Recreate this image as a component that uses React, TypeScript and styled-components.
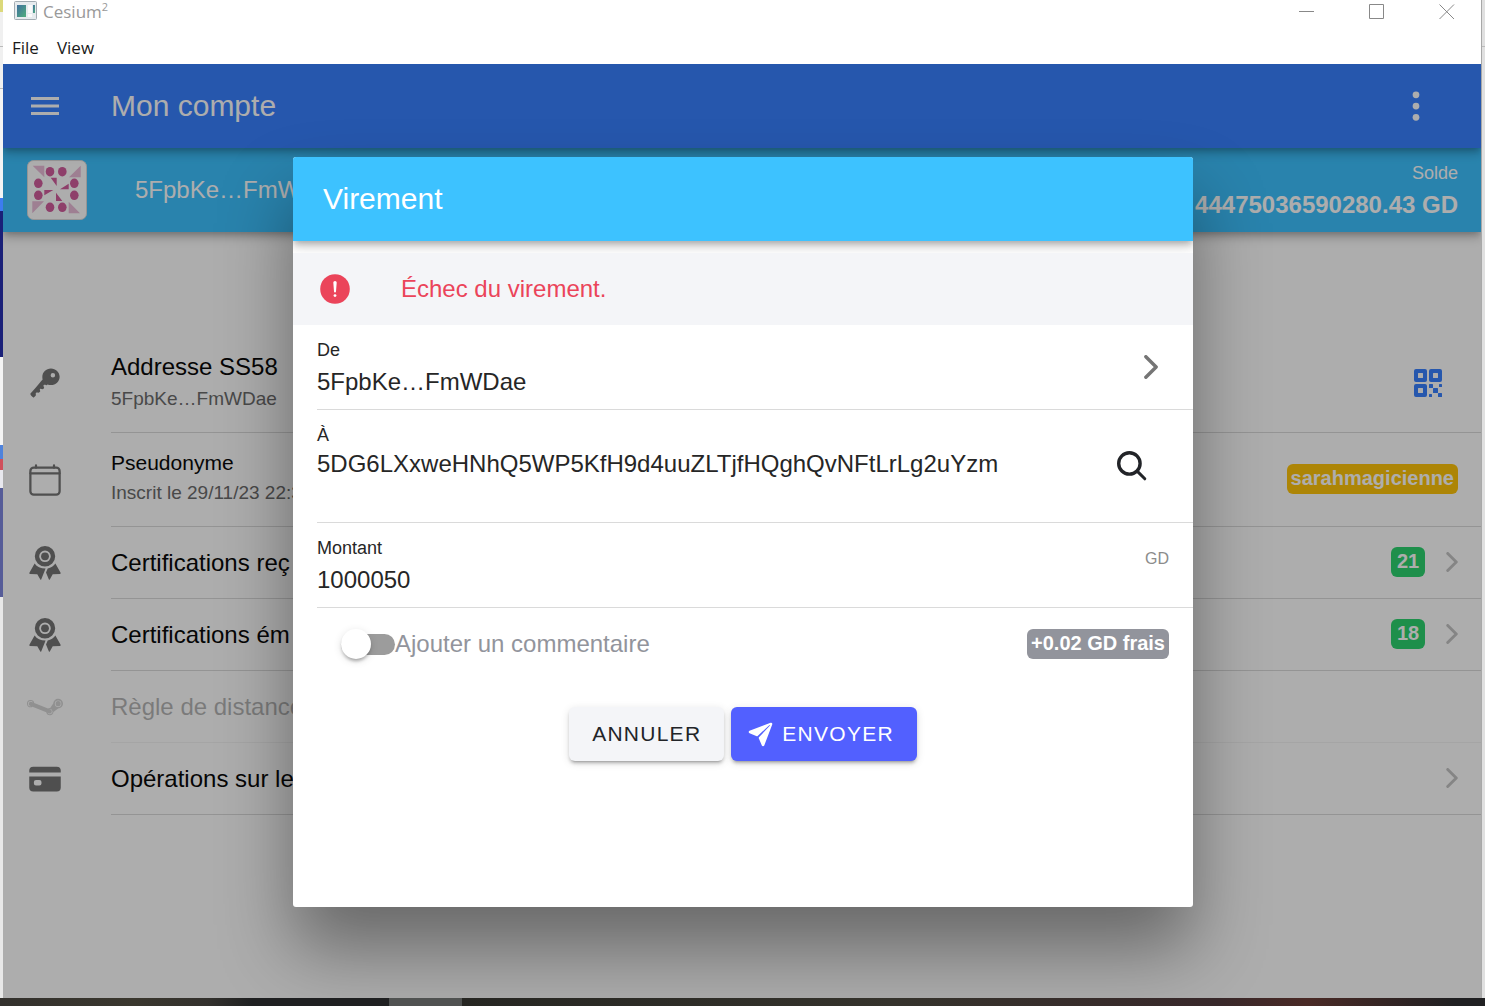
import React from "react";
import styled, { createGlobalStyle } from "styled-components";
import {
  IoCalendarClearOutline,
  IoCard,
  IoEllipsisVertical,
  IoKey,
  IoLogoSteam,
  IoPaperPlane,
  IoQrCode,
} from "react-icons/io5";

const color = {
  primary: "#3880ff",
  secondary: "#3dc2ff",
  tertiary: "#5260ff",
  success: "#2dd36f",
  warning: "#ffc409",
  danger: "#eb445a",
  medium: "#92949c",
  light: "#f4f5f8",
  dark: "#222428",
  line: "#dadada",
  icon: "#757575",
};

const barShadow =
  "0 3px 6px -2px rgba(0,0,0,.2), 0 6px 8px 0 rgba(0,0,0,.14), 0 2px 15px 0 rgba(0,0,0,.12)";

const GlobalStyle = createGlobalStyle`
  *, *::before { box-sizing: border-box; }
  body { margin: 0; font-family: "Liberation Sans", Arial, sans-serif; }
  button, input { font: inherit; color: inherit; }
  button { border: 0; padding: 0; background: none; cursor: pointer; }
  svg { display: block; flex: none; }
`;

/* ---------- desktop and window frame ---------- */

const Desktop = styled.div`
  min-height: 100vh;
  display: grid;
  grid-template-columns: 3px minmax(0, 1fr) 4px;
  grid-template-rows: minmax(0, 1fr) 8px;
  overflow: hidden;
`;

const LeftSliver = styled.div`
  background: linear-gradient(
    #dcd97a 12px, #f0f0f0 12px 46px, #bbb 46px 47px, #f0f0f0 47px 88px,
    #bbb 88px 89px, #f4f4f4 89px 198px, #3d7cf0 198px 211px, #1a2078 211px 357px,
    #f4f4f4 357px 445px, #4f83dc 445px 459px, #d0505c 459px 470px,
    #e8e8ee 470px 488px, #565c98 488px 597px, #e8e8e8 597px
  );
`;

const RightSliver = styled.div`
  border-left: 1px solid #a8a8a8;
  background: linear-gradient(#e0e0e0 46px, #bbb 46px 47px, #e0e0e0 47px);
`;

const Taskbar = styled.div`
  grid-column: 1 / -1;
  background: linear-gradient(
    90deg, #33312d, #3a372e 9%, #33312d 14%, #1f2021 17%, #1f2021 389px,
    #505251 389px 462px, #262622 462px, #35332c 60%, #38282a 82%, #4a2a26 88%, #202022 98%
  );
`;

const Window = styled.section`
  display: flex;
  flex-direction: column;
  min-width: 0;
  background: #fff;
`;

const SystemBars = styled.header`
  height: 64px;
  display: flex;
  flex-direction: column;
  justify-content: space-between;
  font-family: "Open Sans", "Noto Sans", sans-serif;
  font-size: 17px;
`;

const TitleBar = styled.div`
  display: flex;
  align-items: center;
  height: 24px;
  padding: 0 26px 0 11px;
  gap: 6px;
  color: #999;
`;

const WindowTitle = styled.span`
  flex: 1;
  line-height: 24px;
  sup { font-size: 11px; line-height: 0; }
`;

const WindowControls = styled.div`
  display: flex;
  gap: 54px;
  color: #888;
`;

const MenuBar = styled.nav`
  display: flex;
  gap: 18px;
  padding: 0 9px;
  height: 32px;
  line-height: 30px;
  color: #1a1a1a;
`;

/* ---------- account page ---------- */

const AppView = styled.div`
  position: relative;
  flex: 1;
  display: flex;
  flex-direction: column;
  overflow: hidden;
`;

const Toolbar = styled.header`
  position: relative;
  z-index: 1;
  flex: none;
  display: flex;
  align-items: center;
  height: 84px;
  padding: 0 47px 0 28px;
  background: ${color.primary};
  color: #fff;
  box-shadow: ${barShadow};
`;

const PageTitle = styled.h1`
  flex: 1;
  margin: 0 0 0 52px;
  font-size: 30px;
  font-weight: 400;
`;

const AccountBar = styled.div`
  flex: none;
  display: flex;
  align-items: center;
  gap: 48px;
  height: 84px;
  padding: 0 23px 0 24px;
  background: ${color.secondary};
  color: #fff;
  font-size: 24px;
  box-shadow: ${barShadow};
`;

const AccountName = styled.span`
  flex: 1;
`;

const Balance = styled.div`
  display: flex;
  flex-direction: column;
  padding-bottom: 2px;
  text-align: right;
  line-height: 32px;
  small { font-size: 18px; }
`;

const AccountList = styled.ul`
  list-style: none;
  margin: 101px 0 0;
  padding: 0 0 0 24px;
`;

const AccountRow = styled.li<{ $height: number; $disabled?: boolean }>`
  display: flex;
  align-items: center;
  gap: 48px;
  height: ${(p) => p.$height}px;
  color: ${color.icon};
  opacity: ${(p) => (p.$disabled ? 0.3 : 1)};
`;

const RowBody = styled.div`
  flex: 1;
  align-self: stretch;
  display: flex;
  align-items: center;
  justify-content: space-between;
  padding-right: 23px;
  border-bottom: 1px solid ${color.line};
`;

const RowText = styled.div<{ $small?: boolean }>`
  display: flex;
  flex-direction: column;
  padding-bottom: ${(p) => (p.$small ? 4 : 0)}px;
  color: #0a0a0a;
  font-size: ${(p) => (p.$small ? 21 : 24)}px;
  line-height: ${(p) => (p.$small ? 30 : 32)}px;
  small { font-size: 19px; color: #6c6c6c; }
`;

const RowEnd = styled.div`
  display: flex;
  align-items: center;
  gap: 21px;
  padding-bottom: 2px;
  color: #c4c4c4;
`;

const QrButton = styled.button`
  margin-right: 14px;
  color: ${color.primary};
`;

const Badge = styled.span<{ $bg: string }>`
  min-width: 34px;
  height: 30px;
  padding: 0 4px;
  border-radius: 6px;
  background: ${(p) => p.$bg};
  color: #fff;
  font-size: 20px;
  font-weight: 700;
  line-height: 29px;
  text-align: center;
`;

/* ---------- transfer dialog ---------- */

const Backdrop = styled.div`
  position: absolute;
  inset: 0;
  z-index: 2;
  display: grid;
  place-items: center;
  padding: 2px 0 0 2px;
  background: rgba(0, 0, 0, 0.32);
`;

const Dialog = styled.form`
  width: min(900px, 100%);
  min-height: 750px;
  border-radius: 3px;
  overflow: hidden;
  background: #fff;
  color: #262626;
  box-shadow: 0 42px 72px rgba(0, 0, 0, 0.4);
`;

const DialogTitle = styled.h2`
  margin: 0;
  padding: 0 30px;
  background: ${color.secondary};
  color: #fff;
  font-size: 30px;
  font-weight: 400;
  line-height: 84px;
  box-shadow: ${barShadow};
`;

const ErrorItem = styled.div`
  display: flex;
  align-items: center;
  gap: 48px;
  height: 72px;
  margin-top: 12px;
  padding: 0 24px;
  background: ${color.light};
  color: ${color.danger};
  font-size: 24px;
  line-height: 32px;
`;

const Field = styled.div<{ $height: number }>`
  display: flex;
  align-items: center;
  height: ${(p) => p.$height}px;
  margin-left: 24px;
  padding-right: 24px;
  border-bottom: 1px solid ${color.line};
`;

const PickerField = styled.button`
  display: flex;
  align-items: center;
  width: calc(100% - 24px);
  height: 85px;
  margin-left: 24px;
  padding-right: 35px;
  border-bottom: 1px solid ${color.line};
  text-align: left;
`;

const PickerIcon = styled.span`
  color: ${color.icon};
`;

const FieldBody = styled.span<{ $gap?: number }>`
  flex: 1;
  align-self: stretch;
  display: flex;
  flex-direction: column;
  gap: ${(p) => p.$gap ?? 0}px;
  padding-top: 12px;
  font-size: 24px;
  line-height: 32px;
`;

const FieldLabel = styled.label`
  font-size: 18px;
  line-height: 26px;
`;

const FieldInput = styled.input`
  width: 100%;
  height: 32px;
  padding: 0;
  border: 0;
  outline: 0;
  background: none;
`;

const SearchButton = styled.button`
  margin-right: 19px;
  color: ${color.dark};
`;

const Unit = styled.span`
  align-self: flex-start;
  padding-top: 24px;
  font-size: 16px;
  line-height: 24px;
  color: #8c8c8c;
`;

const OptionsRow = styled.div`
  display: flex;
  align-items: center;
  justify-content: space-between;
  height: 72px;
  padding: 0 24px 0 48px;
`;

const ToggleLabel = styled.label`
  display: flex;
  align-items: center;
  color: ${color.medium};
  font-size: 24px;
`;

const Toggle = styled.input`
  appearance: none;
  display: flex;
  align-items: center;
  width: 54px;
  height: 21px;
  margin: 0;
  border-radius: 21px;
  background: #9c9c9c;
  &::before {
    content: "";
    flex: none;
    width: 30px;
    height: 30px;
    border-radius: 50%;
    background: #fff;
    box-shadow: 0 4px 3px -3px rgba(0,0,0,.2), 0 3px 3px rgba(0,0,0,.14), 0 2px 8px rgba(0,0,0,.12);
  }
  &:checked { justify-content: flex-end; background: ${color.tertiary}; }
`;

const Actions = styled.footer`
  display: flex;
  justify-content: center;
  gap: 7px;
  padding-top: 27px;
`;

const ActionButton = styled.button<{ $primary?: boolean }>`
  display: flex;
  align-items: center;
  gap: 8px;
  height: 54px;
  padding: 0 23px 0 ${(p) => (p.$primary ? 16 : 23)}px;
  border-radius: 6px;
  background: ${(p) => (p.$primary ? color.tertiary : color.light)};
  color: ${(p) => (p.$primary ? "#fff" : color.dark)};
  font-size: 21px;
  letter-spacing: 0.06em;
  text-transform: uppercase;
  box-shadow: 0 4px 2px -3px rgba(0,0,0,.2), 0 3px 3px rgba(0,0,0,.14), 0 2px 8px rgba(0,0,0,.12);
`;

/* ---------- drawings ---------- */

const AppIcon = () => (
  <svg width="23" height="22" viewBox="0 0 23 22">
    <defs>
      <linearGradient id="pane" x1="0" y1="0" x2="1" y2="1">
        <stop offset="0" stopColor="#3f6f9f" />
        <stop offset="1" stopColor="#4fae7c" />
      </linearGradient>
    </defs>
    <rect x=".5" y=".5" width="22" height="18" rx="1" fill="#e6ebee" stroke="#a3acb3" />
    <rect x="3" y="4" width="9" height="12" fill="url(#pane)" />
    <rect x="14" y="4" width="4" height="8" fill="#fafafa" />
    <rect x="19" y="4" width="2" height="8" fill="url(#pane)" />
    <rect x="14" y="13" width="4" height="3" fill="#fafafa" />
  </svg>
);

const ControlIcon = ({ d }: { d: string }) => (
  <svg width="16" height="16" viewBox="0 0 16 16" fill="none" stroke="currentColor">
    <path d={d} />
  </svg>
);

const MenuIcon = () => (
  <svg width="28" height="18" viewBox="0 0 28 18" fill="currentColor">
    <path d="M0 0h28v3H0zM0 7.5h28v3H0zM0 15h28v3H0z" />
  </svg>
);

const RibbonIcon = () => (
  <svg width="36" height="36" viewBox="0 0 36 36" fill="currentColor">
    <circle cx="18" cy="11.3" r="8" fill="none" stroke="currentColor" strokeWidth="4.4" />
    <circle cx="18" cy="11.3" r="3.9" />
    <path d="M7.6 18.6C9.9 21.8 13.5 23.6 18.6 23.6L14.2 34.4q-.4.9-.9 0L10.3 29.2 3 28.9q-1.1-.2-.6-1.1z" />
    <path d="M28.4 18.6C26.6 21.2 23.9 23 20.7 23.4L19 27.4 21.9 34.4q.4.9.9 0L25.7 29.2 33 28.9q1.1-.2.6-1.1z" />
  </svg>
);

const SearchIcon = () => (
  <svg width="36" height="36" viewBox="0 0 36 36" fill="none" stroke="currentColor" strokeLinecap="round">
    <circle cx="15.4" cy="15.4" r="10.7" strokeWidth="3.4" />
    <path d="m23.4 23.4 7.4 7.4" strokeWidth="3" />
  </svg>
);

const AlertIcon = () => (
  <svg width="36" height="36" viewBox="0 0 36 36">
    <circle cx="18" cy="18" r="14.8" fill="currentColor" />
    <path d="M16.3 11.6a1.7 1.7 0 0 1 3.4 0l-.7 9a1 1 0 0 1-2 0z" fill="#fff" />
    <circle cx="18" cy="24.6" r="1.4" fill="#fff" />
  </svg>
);

const Chevron = ({ height }: { height: number }) => (
  <svg height={height} width={Math.round(height * 0.58)} viewBox="160 88 192 336" fill="none" stroke="currentColor">
    <path d="m184 112 144 144-144 144" strokeWidth="48" strokeLinecap="round" strokeLinejoin="round" />
  </svg>
);

const dots = [
  [23, 11.7], [35.3, 11.7], [11.3, 23.3], [11.3, 35.3],
  [47.3, 23.3], [47.3, 35.3], [23, 47.3], [35.3, 47.3],
];

const Identicon = () => (
  <svg width="60" height="60" viewBox="0 0 60 60">
    <rect x=".5" y=".5" width="59" height="59" rx="6" fill="#fff" stroke="#dcdcdc" />
    <path
      fill="#e9bbd8"
      d="M5.7 5.7h11.6v11.6zM53.7 5.7v11.6H42zM5.3 41.3H17L5.3 53.3zM41.7 41.7v11.6H53z"
    />
    <g fill="#d15d9d">
      <path d="M23.7 17.7h6V26zM41.7 23.7v5.6H33zM17.3 30h9l-9 5.3zM29 32.7V41h6.3z" />
      {dots.map(([x, y]) => (
        <ellipse key={`${x}-${y}`} cx={x} cy={y} rx="4.3" ry="4.8" />
      ))}
    </g>
  </svg>
);

/* ---------- screens ---------- */

function AccountPage() {
  return (
    <>
      <Toolbar>
        <button aria-label="Menu"><MenuIcon /></button>
        <PageTitle>Mon compte</PageTitle>
        <button aria-label="Options"><IoEllipsisVertical size={36} /></button>
      </Toolbar>
      <AccountBar>
        <Identicon />
        <AccountName>5FpbKe…FmW</AccountName>
        <Balance>
          <small>Solde</small>
          <strong>44475036590280.43 GD</strong>
        </Balance>
      </AccountBar>
      <AccountList>
        <AccountRow $height={100}>
          <IoKey size={36} />
          <RowBody>
            <RowText>
              Addresse SS58
              <small>5FpbKe…FmWDae</small>
            </RowText>
            <QrButton aria-label="QR code"><IoQrCode size={32} /></QrButton>
          </RowBody>
        </AccountRow>
        <AccountRow $height={94}>
          <IoCalendarClearOutline size={36} />
          <RowBody>
            <RowText $small>
              Pseudonyme
              <small>Inscrit le 29/11/23 22:3</small>
            </RowText>
            <RowEnd>
              <Badge $bg={color.warning}>sarahmagicienne</Badge>
            </RowEnd>
          </RowBody>
        </AccountRow>
        <AccountRow $height={72}>
          <RibbonIcon />
          <RowBody>
            <RowText>Certifications reç</RowText>
            <RowEnd>
              <Badge $bg={color.success}>21</Badge>
              <Chevron height={20} />
            </RowEnd>
          </RowBody>
        </AccountRow>
        <AccountRow $height={72}>
          <RibbonIcon />
          <RowBody>
            <RowText>Certifications ém</RowText>
            <RowEnd>
              <Badge $bg={color.success}>18</Badge>
              <Chevron height={20} />
            </RowEnd>
          </RowBody>
        </AccountRow>
        <AccountRow $height={72} $disabled>
          <IoLogoSteam size={36} />
          <RowBody>
            <RowText>Règle de distance</RowText>
          </RowBody>
        </AccountRow>
        <AccountRow $height={72}>
          <IoCard size={36} />
          <RowBody>
            <RowText>Opérations sur le</RowText>
            <RowEnd><Chevron height={20} /></RowEnd>
          </RowBody>
        </AccountRow>
      </AccountList>
    </>
  );
}

function TransferDialog() {
  return (
    <Backdrop>
      <Dialog role="dialog" aria-labelledby="transfer-title" onSubmit={(e) => e.preventDefault()}>
        <DialogTitle id="transfer-title">Virement</DialogTitle>
        <ErrorItem role="alert">
          <AlertIcon />
          Échec du virement.
        </ErrorItem>
        <PickerField type="button">
          <FieldBody $gap={3}>
            <FieldLabel as="span">De</FieldLabel>
            <span>5FpbKe…FmWDae</span>
          </FieldBody>
          <PickerIcon><Chevron height={24} /></PickerIcon>
        </PickerField>
        <Field $height={113}>
          <FieldBody>
            <FieldLabel htmlFor="recipient">À</FieldLabel>
            <FieldInput id="recipient" defaultValue="5DG6LXxweHNhQ5WP5KfH9d4uuZLTjfHQghQvNFtLrLg2uYzm" />
          </FieldBody>
          <SearchButton type="button" aria-label="Rechercher"><SearchIcon /></SearchButton>
        </Field>
        <Field $height={85}>
          <FieldBody $gap={3}>
            <FieldLabel htmlFor="amount">Montant</FieldLabel>
            <FieldInput id="amount" inputMode="decimal" defaultValue="1000050" />
          </FieldBody>
          <Unit>GD</Unit>
        </Field>
        <OptionsRow>
          <ToggleLabel>
            <Toggle type="checkbox" role="switch" />
            Ajouter un commentaire
          </ToggleLabel>
          <Badge $bg={color.medium}>+0.02 GD frais</Badge>
        </OptionsRow>
        <Actions>
          <ActionButton type="button">Annuler</ActionButton>
          <ActionButton type="submit" $primary>
            <IoPaperPlane size={27} />
            Envoyer
          </ActionButton>
        </Actions>
      </Dialog>
    </Backdrop>
  );
}

export default function App() {
  return (
    <Desktop>
      <GlobalStyle />
      <LeftSliver />
      <Window>
        <SystemBars>
          <TitleBar>
            <AppIcon />
            <WindowTitle>Cesium<sup>2</sup></WindowTitle>
            <WindowControls>
              <button aria-label="Minimize"><ControlIcon d="M0 7.5h15" /></button>
              <button aria-label="Maximize"><ControlIcon d="M.5.5h14v14H.5z" /></button>
              <button aria-label="Close"><ControlIcon d="M.5.5l14.5 14.5M15 .5.5 15" /></button>
            </WindowControls>
          </TitleBar>
          <MenuBar>
            <button>File</button>
            <button>View</button>
          </MenuBar>
        </SystemBars>
        <AppView>
          <AccountPage />
          <TransferDialog />
        </AppView>
      </Window>
      <RightSliver />
      <Taskbar />
    </Desktop>
  );
}
